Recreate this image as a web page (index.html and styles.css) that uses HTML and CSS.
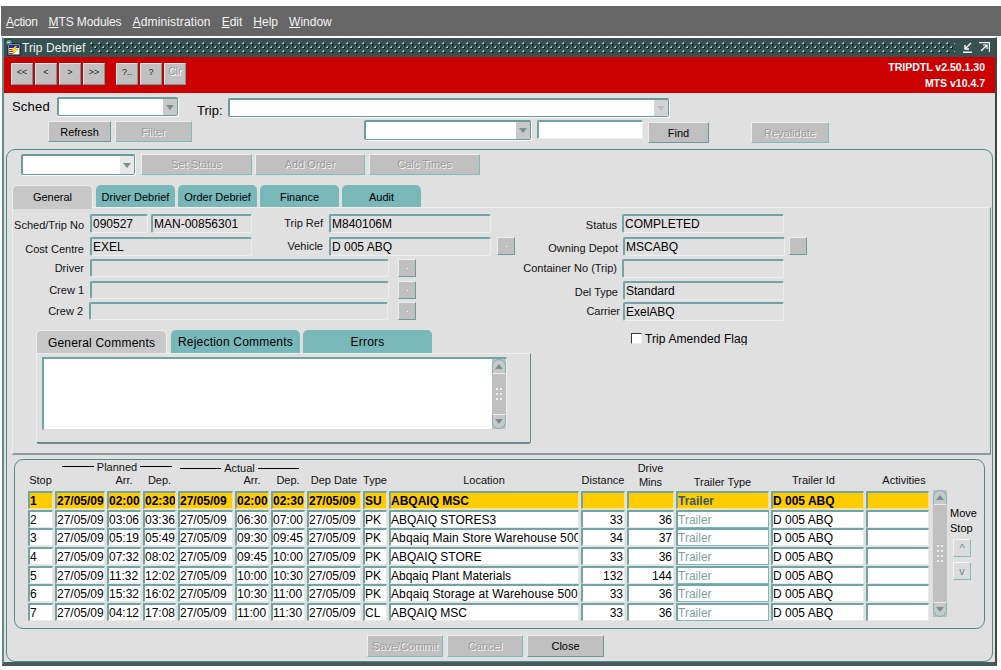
FILE: index.html
```html
<!DOCTYPE html>
<html lang="en">
<head>
<meta charset="utf-8">
<title>Trip Debrief</title>
<link rel="stylesheet" href="styles.css">
</head>
<body>
<nav class="menubar">
  <span><u>A</u>ction</span><span><u>M</u>TS Modules</span><span><u>A</u>dministration</span><span><u>E</u>dit</span><span><u>H</u>elp</span><span><u>W</u>indow</span>
</nav>
<main class="window">
  <header class="titlebar">
    <svg class="appicon" viewBox="0 0 17 17" width="17" height="17"><circle cx="5" cy="4" r="3.6" fill="#5f9f8f" stroke="#1c3030" stroke-width=".8"/><path d="M3 3h3v2H4z" fill="#d8e8d8"/><rect x="4" y="5" width="12" height="11" fill="#fff" stroke="#0c1428"/><rect x="5" y="6" width="10" height="3" fill="#1c2cb0"/><path d="M5 10h5v1H5zM5 12h4v1H5zM5 14h4v1H5z" fill="#d02828"/><path d="M11 7 7 12h3l-2 4 6-6h-3l2-3z" fill="#f4e41c" stroke="#a07010" stroke-width=".4"/></svg>
    <span class="title">Trip Debrief</span>
    <span class="dots"></span>
    <svg class="winicon" viewBox="0 0 11 11" width="11" height="11"><path d="M1 10.2h9M9 1 3 7M3 3v4h4" fill="none" stroke="#fff" stroke-width="1.4"/></svg>
    <svg class="winicon wide" viewBox="0 0 11 11" width="11" height="11"><path d="M0 .6h10.4V10M2 9l6-6M4 3h4v4" fill="none" stroke="#fff" stroke-width="1.2"/></svg>
  </header>
  <section class="toolbar">
    <div class="tools">
      <button class="tb">&lt;&lt;</button><button class="tb">&lt;</button><button class="tb">&gt;</button><button class="tb">&gt;&gt;</button>
      <button class="tb tb-sep">?..</button><button class="tb">?</button><button class="tb off">Clr</button>
    </div>
    <div class="version"><div>TRIPDTL v2.50.1.30</div><div>MTS v10.4.7</div></div>
  </section>
  <section class="search">
    <div class="search-a">
      <label class="sched">Sched</label>
      <div class="combo w-sched"><span class="arrow-box"><i class="tri"></i></span></div>
      <label class="trip">Trip:</label>
      <div class="combo w-trip"><span class="arrow-box faint"><i class="tri"></i></span></div>
    </div>
    <div class="search-b">
      <button class="btn w-refresh">Refresh</button>
      <button class="btn off w-filter">Filter</button>
      <div class="combo w-mid"><span class="arrow-box"><i class="tri"></i></span></div>
      <div class="field white w-find"></div>
      <button class="btn w-findbtn">Find</button>
      <button class="btn off w-reval">Revalidate</button>
    </div>
  </section>
  <section class="outer">
    <div class="actions">
      <div class="combo w-act"><span class="arrow-box soft"><i class="tri"></i></span></div>
      <button class="btn off w-set">Set Status</button>
      <button class="btn off w-add">Add Order</button>
      <button class="btn off w-calc">Calc Times</button>
    </div>
    <div class="tabs">
      <span class="tab on">General</span><span class="tab">Driver Debrief</span><span class="tab">Order Debrief</span><span class="tab">Finance</span><span class="tab">Audit</span>
    </div>
    <div class="tabpanel">
      <div class="frow r1">
        <label class="lb l1 p2">Sched/Trip No</label><div class="field fa">090527</div><div class="field fb">MAN-00856301</div>
        <label class="lb l2">Trip Ref</label><div class="field fc">M840106M</div>
        <label class="lb l3 p2">Status</label><div class="field fd">COMPLETED</div>
      </div>
      <div class="frow">
        <label class="lb l1 p3">Cost Centre</label><div class="field fe">EXEL</div>
        <label class="lb l2">Vehicle</label><div class="field fc">D 005 ABQ</div><button class="lov lv1"><i></i></button>
        <label class="lb l4 p2">Owning Depot</label><div class="field fd">MSCABQ</div><button class="lov lv2"></button>
      </div>
      <div class="frow">
        <label class="lb l1">Driver</label><div class="field ff"></div><button class="lov lv3"><i></i></button>
        <label class="lb l5">Container No (Trip)</label><div class="field fd"></div>
      </div>
      <div class="frow r4">
        <label class="lb l1">Crew 1</label><div class="field ff"></div><button class="lov lv3"><i></i></button>
        <label class="lb l6 p2">Del Type</label><div class="field fg">Standard</div>
      </div>
      <div class="frow">
        <label class="lb l1b">Crew 2</label><div class="field ff"></div><button class="lov lv4"><i></i></button>
        <label class="lb l7">Carrier</label><div class="field fg">ExelABQ</div>
      </div>
      <div class="sub">
        <div class="subblock">
          <div class="subtabs"><span class="stab on">General Comments</span><span class="stab">Rejection Comments</span><span class="stab">Errors</span></div>
          <div class="subpanel">
            <div class="memo">
              <div class="scroll memo-scroll">
                <span class="sb-btn top"><i class="tri up"></i></span>
                <span class="grip"><i></i><i></i><i></i></span>
                <span class="sb-btn bot"><i class="tri"></i></span>
              </div>
            </div>
          </div>
        </div>
        <div class="flag"><span class="check"></span><span class="flagtext">Trip Amended Flag</span></div>
      </div>
    </div>
    <div class="stops">
      <div class="tablewrap">
        <div class="grid head">
          <div class="grp planned"><span>Planned</span></div>
          <div class="grp actual"><span>Actual</span></div>
          <div class="h c1">Stop</div>
          <div class="h c3">Arr.</div>
          <div class="h c4">Dep.</div>
          <div class="h c6">Arr.</div>
          <div class="h c7">Dep.</div>
          <div class="h c8">Dep Date</div>
          <div class="h c9">Type</div>
          <div class="h c10">Location</div>
          <div class="h c11">Distance</div>
          <div class="h c12 two">Drive<br>Mins</div>
          <div class="h c13 low">Trailer Type</div>
          <div class="h c14">Trailer Id</div>
          <div class="h c15">Activities</div>
        </div>
        <div class="grid body">
          <div class="d hi">1</div><div class="d hi">27/05/09</div><div class="d hi">02:00</div><div class="d hi">02:30</div><div class="d hi">27/05/09</div><div class="d hi">02:00</div><div class="d hi">02:30</div><div class="d hi">27/05/09</div><div class="d hi">SU</div><div class="d hi">ABQAIQ MSC</div><div class="d hi"></div><div class="d hi"></div><div class="d hi tr">Trailer</div><div class="d hi">D 005 ABQ</div><div class="d hi"></div>
          <div class="d">2</div><div class="d">27/05/09</div><div class="d">03:06</div><div class="d">03:36</div><div class="d">27/05/09</div><div class="d">06:30</div><div class="d">07:00</div><div class="d">27/05/09</div><div class="d">PK</div><div class="d">ABQAIQ STORES3</div><div class="d n">33</div><div class="d n">36</div><div class="d tr">Trailer</div><div class="d">D 005 ABQ</div><div class="d"></div>
          <div class="d">3</div><div class="d">27/05/09</div><div class="d">05:19</div><div class="d">05:49</div><div class="d">27/05/09</div><div class="d">09:30</div><div class="d">09:45</div><div class="d">27/05/09</div><div class="d">PK</div><div class="d loc">Abqaiq Main Store Warehouse 500</div><div class="d n">34</div><div class="d n">37</div><div class="d tr">Trailer</div><div class="d">D 005 ABQ</div><div class="d"></div>
          <div class="d">4</div><div class="d">27/05/09</div><div class="d">07:32</div><div class="d">08:02</div><div class="d">27/05/09</div><div class="d">09:45</div><div class="d">10:00</div><div class="d">27/05/09</div><div class="d">PK</div><div class="d">ABQAIQ STORE</div><div class="d n">33</div><div class="d n">36</div><div class="d tr">Trailer</div><div class="d">D 005 ABQ</div><div class="d"></div>
          <div class="d">5</div><div class="d">27/05/09</div><div class="d">11:32</div><div class="d">12:02</div><div class="d">27/05/09</div><div class="d">10:00</div><div class="d">10:30</div><div class="d">27/05/09</div><div class="d">PK</div><div class="d">Abqaiq Plant Materials</div><div class="d n">132</div><div class="d n">144</div><div class="d tr">Trailer</div><div class="d">D 005 ABQ</div><div class="d"></div>
          <div class="d">6</div><div class="d">27/05/09</div><div class="d">15:32</div><div class="d">16:02</div><div class="d">27/05/09</div><div class="d">10:30</div><div class="d">11:00</div><div class="d">27/05/09</div><div class="d">PK</div><div class="d loc">Abqaiq Storage at Warehouse 500</div><div class="d n">33</div><div class="d n">36</div><div class="d tr">Trailer</div><div class="d">D 005 ABQ</div><div class="d"></div>
          <div class="d">7</div><div class="d">27/05/09</div><div class="d">04:12</div><div class="d">17:08</div><div class="d">27/05/09</div><div class="d">11:00</div><div class="d">11:30</div><div class="d">27/05/09</div><div class="d">CL</div><div class="d">ABQAIQ MSC</div><div class="d n">33</div><div class="d n">36</div><div class="d tr">Trailer</div><div class="d">D 005 ABQ</div><div class="d"></div>
        </div>
      </div>
      <div class="scroll table-scroll">
        <span class="sb-btn top"><i class="tri up"></i></span>
        <span class="grip"><i></i><i></i><i></i><i></i></span>
        <span class="sb-btn bot"><i class="tri"></i></span>
      </div>
      <div class="move">
        <div class="movelabel">Move<br>Stop</div>
        <button class="mv">^</button>
        <button class="mv">v</button>
      </div>
    </div>
    <div class="footer">
      <button class="btn off w-foot">Save/Commit</button>
      <button class="btn off w-foot">Cancel</button>
      <button class="btn w-foot">Close</button>
    </div>
  </section>
</main>
</body>
</html>
```
FILE: styles.css
```css
* { box-sizing: border-box; }
html, body { margin: 0; padding: 0; background: #fff; }
body { width: 1001px; height: 670px; overflow: hidden; font: 12px/14px "Liberation Sans", Arial, sans-serif; color: #000; }
button { font: inherit; margin: 0; padding: 0; display: block; color: #000; }

.menubar { margin: 6px 0 0 1px; height: 30px; background: #666; display: flex; align-items: center; padding: 1px 0 0 5px; gap: 11px; }
.menubar span { color: #f4f4f4; }
.menubar span:nth-child(1) { letter-spacing: -.3px; }
.menubar span:nth-child(2) { letter-spacing: -.1px; }
.menubar span:nth-child(3) { letter-spacing: .15px; }

.window { margin: 1px 0 0 2px; width: 995px; height: 629px; background: #e0e0e0; border-top: 1px solid #fff; border-left: 2px solid #5f8d8d; border-right: 2px solid #444; border-bottom: 4px solid #4a5a5a; }

.titlebar { height: 19px; background: #36514f; display: flex; align-items: center; padding: 0 3px 0 0; }
.appicon { flex: none; }
.title { margin-left: 1px; color: #f0f4f4; letter-spacing: .1px; }
.dots { flex: 1; height: 11px; margin: 0 7px 0 5px;
  background-image:
    radial-gradient(circle at 1.5px 1.5px, #8fcaca 1px, transparent 1px),
    radial-gradient(circle at 5.5px 5.5px, #8fcaca 1px, transparent 1px),
    radial-gradient(circle at 2.5px 2.5px, #0a1c1c 1px, transparent 1px),
    radial-gradient(circle at 6.5px 6.5px, #0a1c1c 1px, transparent 1px);
  background-size: 8px 8px; }
.winicon { flex: none; margin-right: 6px; }
.winicon.wide { margin-right: 2px; }

.toolbar { height: 36px; background: #c00; display: flex; justify-content: space-between; padding: 6px 10px 0 7px; }
.tools { display: flex; gap: 2px; }
.tb { width: 22px; height: 22px; background: #c0c0c0; border: 1px solid; border-color: #eee #6a9a9a #6a9a9a #eee; font-size: 9px; line-height: 12px; padding-bottom: 5px; color: #222; }
.tb-sep { margin-left: 9px; }
.tb.off { color: #999; text-shadow: 1px 1px 0 #fff; font-size: 10px; }
.version { margin-top: -4px; color: #fff; font-weight: bold; font-size: 10.5px; line-height: 16px; text-align: right; }

.search { height: 56px; }
.search-a { display: flex; height: 27px; padding-top: 4px; }
.search-b { display: flex; }
.sched { font-size: 13px; line-height: 18px; margin: 1px 0 0 8px; width: 45px; letter-spacing: .2px; }
.trip { font-size: 13px; line-height: 18px; margin: 5px 0 0 19px; width: 31px; }
.combo { background: #fff; border: 1px solid #6a9c9c; border-width: 2px 1px 1px 2px; border-radius: 2px; box-shadow: 1px 1px 0 #fff; flex: none; display: flex; justify-content: flex-end; }
.arrow-box { width: 14px; background: #c8c8c8; display: flex; align-items: center; justify-content: center; }
.arrow-box.faint { background: #d4d4d4; }
.arrow-box.faint .tri { border-top-color: #b4c0c0; }
.arrow-box.soft { background: #e8e8e8; }
.tri { display: block; width: 0; height: 0; border: 4px solid transparent; border-top: 5px solid #7a9090; border-bottom: 0; }
.tri.up { border-top: 0; border-bottom: 5px solid #7a9090; }
.w-sched { width: 121px; height: 19px; }
.w-trip { width: 441px; height: 19px; margin-top: 1px; }
.btn { height: 21px; background: #c0c0c0; border: 1px solid; border-color: #eee #6a9a9a #6a9a9a #eee; flex: none; font-size: 11px; line-height: 18px; }
.btn.off { color: #9c9c9c; text-shadow: 1px 1px 0 #f6f6f6; border-right-color: #7cbcbc; border-bottom-color: #7cbcbc; }
.w-refresh { width: 63px; margin: 1px 0 0 44px; }
.w-filter { width: 77px; margin: 1px 0 0 4px; }
.w-mid { width: 167px; height: 20px; margin: 0 0 0 172px; }
.w-find { width: 106px; height: 20px; margin-left: 6px; border-radius: 2px; border-right: 1px solid #6a9c9c; }
.w-findbtn { width: 61px; margin: 2px 0 0 5px; }
.w-reval { width: 78px; margin: 2px 0 0 42px; }

.field { height: 19px; background: #e0e0e0; border: 1px solid #eee; border-top: 2px solid #6fa5a5; border-left: 2px solid #6fa5a5; border-radius: 2px; flex: none; padding-left: 1px; line-height: 17px; overflow: hidden; white-space: nowrap; }
.field.white { background: #fff; }

.outer { margin: 0 2px; height: 513px; border: 1px solid #4f8c8c; border-radius: 9px; padding: 4px 0 0 5px; }
.actions { display: flex; margin-left: 9px; height: 31px; }
.w-act { width: 114px; height: 21px; }
.w-set { width: 111px; margin-left: 6px; }
.w-add { width: 110px; margin-left: 3px; }
.w-calc { width: 111px; margin-left: 4px; }
.actions .btn { line-height: 17px; }

.tabs { display: flex; height: 22px; gap: 3px; }
.tab { width: 79px; height: 22px; background: #78b8b8; border-radius: 5px 5px 0 0; text-align: center; font-size: 11px; line-height: 24px; }
.tab.on { width: 81px; height: 24px; background: #c8c8c8; border: 1px solid #eee; border-bottom: 0; position: relative; z-index: 1; line-height: 23px; }
.tabpanel { width: 979px; height: 248px; background: #e0e0e0; border: 1px solid #eee; border-right-color: #6a8c8c; border-bottom: 2px solid #8c9c9c; padding: 6px 0 0 0; }
.frow { display: flex; height: 22px; }
.frow.r1 { height: 23px; }
.frow.r4 { height: 21px; }
.lb { flex: none; text-align: right; font-size: 11px; line-height: 18px; white-space: nowrap; color: #111; }
.p2 { padding-top: 2px; }
.p3 { padding-top: 3px; }
.l1 { width: 71px; margin-right: 6px; }
.l1b { width: 70px; margin-right: 6px; }
.l2 { width: 71px; margin-right: 6px; }
.l3 { width: 126px; margin-right: 5px; }
.l4 { width: 103px; margin-right: 5px; }
.l5 { width: 201px; margin-right: 5px; }
.l6 { width: 202px; margin-right: 5px; }
.l7 { width: 204px; margin-right: 3px; }
.fa { width: 58px; }
.fb { width: 101px; margin-left: 3px; }
.fc, .fd, .fe { width: 162px; }
.fg { width: 161px; }
.ff { width: 299px; height: 18px; }
.lov { width: 18px; height: 18px; background: #c0c0c0; border: 1px solid; border-color: #eee #6a9a9a #6a9a9a #eee; display: flex; align-items: center; justify-content: center; flex: none; }
.lov i { width: 1px; height: 1px; background: #fff; display: block; }
.lv1 { margin-left: 6px; }
.lv2 { margin-left: 4px; }
.lv3 { margin-left: 9px; }
.lv4 { margin-left: 10px; }

.sub { display: flex; margin-top: 6px; }
.subblock { margin-left: 23px; width: 495px; flex: none; }
.subtabs { display: flex; height: 23px; gap: 3px; }
.stab { width: 129px; height: 23px; background: #78b8b8; border-radius: 5px 5px 0 0; text-align: center; line-height: 25px; letter-spacing: .2px; }
.stab.on { width: 131px; background: #c8c8c8; border: 1px solid #eee; border-bottom: 0; line-height: 24px; margin-right: 1px; }
.subpanel { height: 91px; background: #e0e0e0; border: 1px solid #eee; border-right-color: #6a8c8c; border-bottom: 2px solid #6a8c8c; padding: 3px 0 0 5px; border-radius: 0 0 3px 3px; }
.memo { width: 465px; height: 73px; background: #fff; border: 2px solid #6fa5a5; border-right: 1px solid #eee; border-bottom: 1px solid #ddd; position: relative; }
.flag { display: flex; align-items: flex-start; margin: 3px 0 0 100px; }
.check { display: block; width: 11px; height: 11px; background: #fff; border: 1px solid #eee; border-top-color: #334; border-left-color: #334; margin-right: 3px; }
.flagtext { height: 12px; overflow: hidden; line-height: 13px; letter-spacing: .1px; }

.scroll { background: #c0c0c0; display: flex; flex-direction: column; justify-content: space-between; align-items: stretch; }
.memo-scroll { position: absolute; right: 0; top: 0; bottom: 0; width: 15px; border-left: 1px solid #fff; }
.sb-btn { height: 15px; display: flex; align-items: center; justify-content: center; background: #c8c8c8; border: 1px solid #78b8b8; border-radius: 7px 7px 0 0; border-bottom-color: #eee; }
.sb-btn.bot { border-radius: 0 0 7px 7px; border-top-color: #eee; border-bottom-color: #78b8b8; }
.grip { display: flex; flex-direction: column; gap: 3px; align-items: center; }
.grip i { width: 6px; height: 2px; border-left: 2px solid #eee; border-right: 2px solid #eee; display: block; }

.stops { margin: 4px 0 0 2px; width: 971px; height: 170px; border: 1px solid #4f8c8c; border-radius: 9px; padding: 1px 0 0 13px; display: flex; }
.tablewrap { width: 901px; flex: none; }
.grid { display: grid; grid-template-columns: 25px 50px 34px 33px 55px 34px 34px 54px 24px 190px 44px 47px 93px 93px 63px; column-gap: 2px; }
.head { height: 30px; grid-template-rows: 15px 15px; font-size: 11px; line-height: 12px; color: #111; text-align: center; }
.grp { grid-row: 1; display: flex; align-items: center; gap: 3px; }
.grp::before, .grp::after { content: ""; flex: 1; height: 1px; background: #000; }
.planned { grid-column: 2 / 5; margin: 0 4px 4px 7px; }
.actual { grid-column: 5 / 8; margin: 0 6px 0 2px; height: 14px; }
.h { grid-row: 2; white-space: nowrap; align-self: end; padding-bottom: 5px; }
.c1 { grid-column: 1; }
.c3 { grid-column: 3; }
.c4 { grid-column: 4; }
.c6 { grid-column: 6; }
.c7 { grid-column: 7; }
.c8 { grid-column: 8; }
.c9 { grid-column: 9; }
.c10 { grid-column: 10; }
.c11 { grid-column: 11; }
.c12 { grid-column: 12; grid-row: 1 / 3; padding-bottom: 2px; line-height: 14px; }
.c13 { grid-column: 13; padding-bottom: 3px; }
.c14 { grid-column: 14; padding-right: 8px; }
.c15 { grid-column: 15; padding-left: 13px; }
.body { grid-auto-rows: 18.7px; }
.d { height: 18px; background: #fff; border: 1px solid #e8e8e8; border-top: 2px solid #6fa5a5; border-left: 2px solid #6fa5a5; line-height: 16px; overflow: hidden; white-space: nowrap; }
.d.n { text-align: right; padding-right: 1px; }
.d.loc { letter-spacing: .1px; }
.d.tr { color: #7f9f9f; border-right-color: #78b8b8; border-bottom-color: #78b8b8; }
.d.hi { background: #fc0; font-weight: bold; border-color: #6fa5a5 #ffe27a #ffe27a #6fa5a5; }
.d.hi.tr { color: #37586a; }
.table-scroll { width: 14px; height: 127px; margin: 29px 0 0 4px; flex: none; }
.move { width: 34px; margin: 45px 0 0 3px; font-size: 11px; line-height: 15px; }
.movelabel { margin-bottom: 3px; }
.mv { width: 18px; height: 18px; margin: 0 0 5px 3px; background: #dcdcdc; border: 1px solid; border-color: #f4f4f4 #7cbcbc #7cbcbc #f4f4f4; color: #6a8a8a; font-size: 11px; line-height: 14px; }

.footer { display: flex; gap: 4px; margin: 6px 0 0 355px; }
.w-foot { width: 76px; height: 22px; }
.w-foot:last-child { width: 77px; }
```
